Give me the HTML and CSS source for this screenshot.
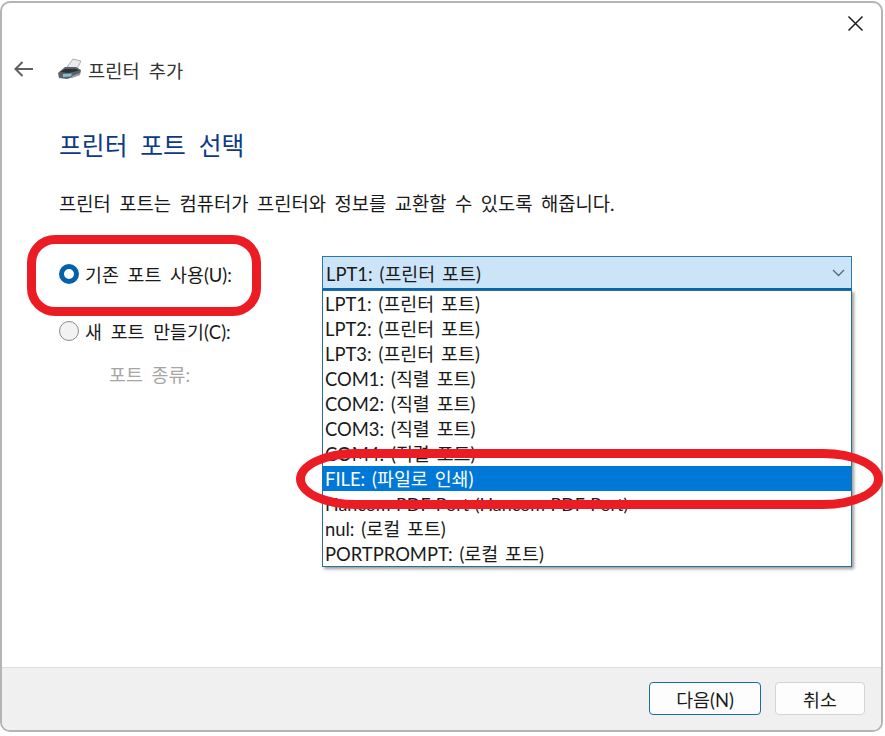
FILE: index.html
```html
<!DOCTYPE html>
<html lang="ko">
<head>
    <meta charset="UTF-8">
    <meta name="viewport" content="width=device-width, initial-scale=1.0">
    <title>프린터 추가</title>
    <link rel="stylesheet" href="styles.css">
</head>
<body>
    <div class="window">
        <div class="close-row">
            <svg class="close-icon" width="17" height="17" viewBox="0 0 17 17">
                <path d="M1.5 1.5 L15.5 15.5 M15.5 1.5 L1.5 15.5" stroke="#1c1c1c" stroke-width="1.5" fill="none"/>
            </svg>
        </div>

        <div class="title-row">
            <svg class="back-icon" width="20" height="16" viewBox="0 0 20 16">
                <path d="M19 8 H2 M8.5 1 L1.5 8 L8.5 15" stroke="#5f5f5f" stroke-width="2" fill="none"/>
            </svg>
            <svg class="printer-icon" width="25" height="22" viewBox="0 0 25 22">
                <path d="M10 9 L16 1 L24 3 L20 11 Z" fill="#e9eaec" stroke="#9a9da0" stroke-width="0.8"/>
                <path d="M1 15 L8 9 L19 9 L24 12 L23 17 L10 21 L2 20 Z" fill="#5a6268"/>
                <path d="M3 14 L8 11 L19 11 L22 12.5 L12 15 Z" fill="#2c3136"/>
                <path d="M6 16 L15 15.5 L14 18.5 L6 19 Z" fill="#7fc0d2"/>
                <path d="M15 18 L23 15 L23 17 L15 20 Z" fill="#9aa1a6"/>
            </svg>
            <span class="title-text">프린터 추가</span>
        </div>

        <div class="content">
            <h1>프린터 포트 선택</h1>
            <p class="desc">프린터 포트는 컴퓨터가 프린터와 정보를 교환할 수 있도록 해줍니다.</p>

            <div class="port-form">
                <div class="options">
                    <div class="option">
                        <span class="radio checked"></span>
                        <span>기존 포트 사용(U):</span>
                    </div>
                    <div class="option">
                        <span class="radio"></span>
                        <span>새 포트 만들기(C):</span>
                    </div>
                    <div class="port-type">포트 종류:</div>
                </div>

                <div class="combo">
                    <div class="combo-box">
                        <span>LPT1: (프린터 포트)</span>
                        <svg width="13" height="8" viewBox="0 0 13 8">
                            <path d="M1 1 L6.5 6.5 L12 1" stroke="#4c6a80" stroke-width="1.3" fill="none"/>
                        </svg>
                    </div>
                    <ul class="combo-list">
                        <li>LPT1: (프린터 포트)</li>
                        <li>LPT2: (프린터 포트)</li>
                        <li>LPT3: (프린터 포트)</li>
                        <li>COM1: (직렬 포트)</li>
                        <li>COM2: (직렬 포트)</li>
                        <li>COM3: (직렬 포트)</li>
                        <li>COM4: (직렬 포트)</li>
                        <li class="selected">FILE: (파일로 인쇄)</li>
                        <li class="latin">Hancom PDF Port (Hancom PDF Port)</li>
                        <li>nul: (로컬 포트)</li>
                        <li>PORTPROMPT: (로컬 포트)</li>
                    </ul>
                </div>
            </div>
        </div>

        <div class="footer">
            <button class="btn btn-default">다음(N)</button>
            <button class="btn">취소</button>
        </div>

        <!-- 빨간 표시 -->
        <div class="mark mark-radio"></div>
        <div class="mark mark-file"></div>
    </div>
</body>
</html>
```

FILE: styles.css
```css
* {
    margin: 0;
    padding: 0;
    box-sizing: border-box;
    font-family: "Lato", "Noto Sans CJK KR", sans-serif;
}

body {
    background: #fff;
    width: 885px;
    height: 736px;
    overflow: hidden;
    padding-top: 1px;
}

.window {
    position: relative;
    width: 883px;
    height: 731px;
    background: #fff;
    border: 2px solid #b4b4b4;
    border-radius: 10px;
    display: flex;
    flex-direction: column;
    color: #1a1a1a;
}

.close-row {
    height: 54px;
    display: flex;
    justify-content: flex-end;
    padding: 12px 17px 0 0;
}

.title-row {
    display: flex;
    align-items: center;
    height: 24px;
}

.back-icon {
    margin-left: 12px;
}

.printer-icon {
    margin-left: 23px;
}

.title-text {
    margin-left: 6px;
    font-size: 18.7px;
    word-spacing: 4.5px;
    color: #333;
}

.content {
    flex: 1;
    padding-left: 57px;
}

h1 {
    font-size: 24.8px;
    font-weight: 400;
    word-spacing: 6.5px;
    color: #0b3a86;
    line-height: 34px;
    margin-top: 48px;
}

.desc {
    font-size: 18.8px;
    word-spacing: 3.6px;
    line-height: 24px;
    margin-top: 29px;
}

.port-form {
    display: flex;
    margin-top: 41px;
}

.options {
    width: 263px;
    font-size: 18.4px;
    word-spacing: 4px;
    padding-top: 5px;
}

.option {
    display: flex;
    align-items: center;
    gap: 6px;
    height: 24px;
    margin-bottom: 33px;
}

.radio {
    width: 20px;
    height: 20px;
    border-radius: 50%;
    border: 1px solid #8a8a8a;
    background: #f2f2f2;
    flex-shrink: 0;
}

.radio.checked {
    border: 5.5px solid #0560ac;
    background: #fff;
}

.port-type {
    color: #a6a6a6;
    padding-left: 50px;
    margin-top: -13px;
    line-height: 24px;
}

.combo {
    position: relative;
    width: 530px;
    font-size: 18.4px;
    word-spacing: 2.2px;
}

.combo-box {
    height: 34px;
    margin-top: -1px;
    background: #cce4f7;
    border: 1px solid #2a78ab;
    border-bottom: 2px solid #0a67b0;
    display: flex;
    align-items: center;
    justify-content: space-between;
    padding: 0 6px 0 3px;
}

.combo-list {
    position: absolute;
    left: 0;
    top: 33px;
    width: 530px;
    list-style: none;
    background: #fff;
    border: 1px solid #2a6f99;
    box-shadow: 2px 2px 3px rgba(0, 0, 0, 0.4);
}

.combo-list li {
    height: 25px;
    line-height: 25px;
    padding: 1px 0 0 2px;
    white-space: nowrap;
}

.combo-list li.latin {
    font-size: 17.9px;
    word-spacing: 1px;
}

.combo-list li.selected {
    background: #0078d7;
    color: #fff;
}

.footer {
    height: 63px;
    background: #f0f0f0;
    border-top: 1px solid #dcdcdc;
    border-radius: 0 0 8px 8px;
    display: flex;
    justify-content: flex-end;
    align-items: flex-start;
    gap: 14px;
    padding: 14px 16px 0 0;
}

.btn {
    width: 90px;
    height: 33px;
    background: #fdfdfd;
    border: 1px solid #d4d4d4;
    border-radius: 4px;
    font-size: 18.4px;
    color: #1a1a1a;
}

.btn-default {
    width: 112px;
    border: 1px solid #1a6c9c;
}

.mark {
    position: absolute;
    border: 9.5px solid #ec1c24;
}

.mark-radio {
    left: 25px;
    top: 232px;
    width: 234px;
    height: 81px;
    border-radius: 28px;
}

.mark-file {
    left: 294px;
    top: 446px;
    width: 587px;
    height: 60px;
    border-radius: 60px / 30px;
}
```
